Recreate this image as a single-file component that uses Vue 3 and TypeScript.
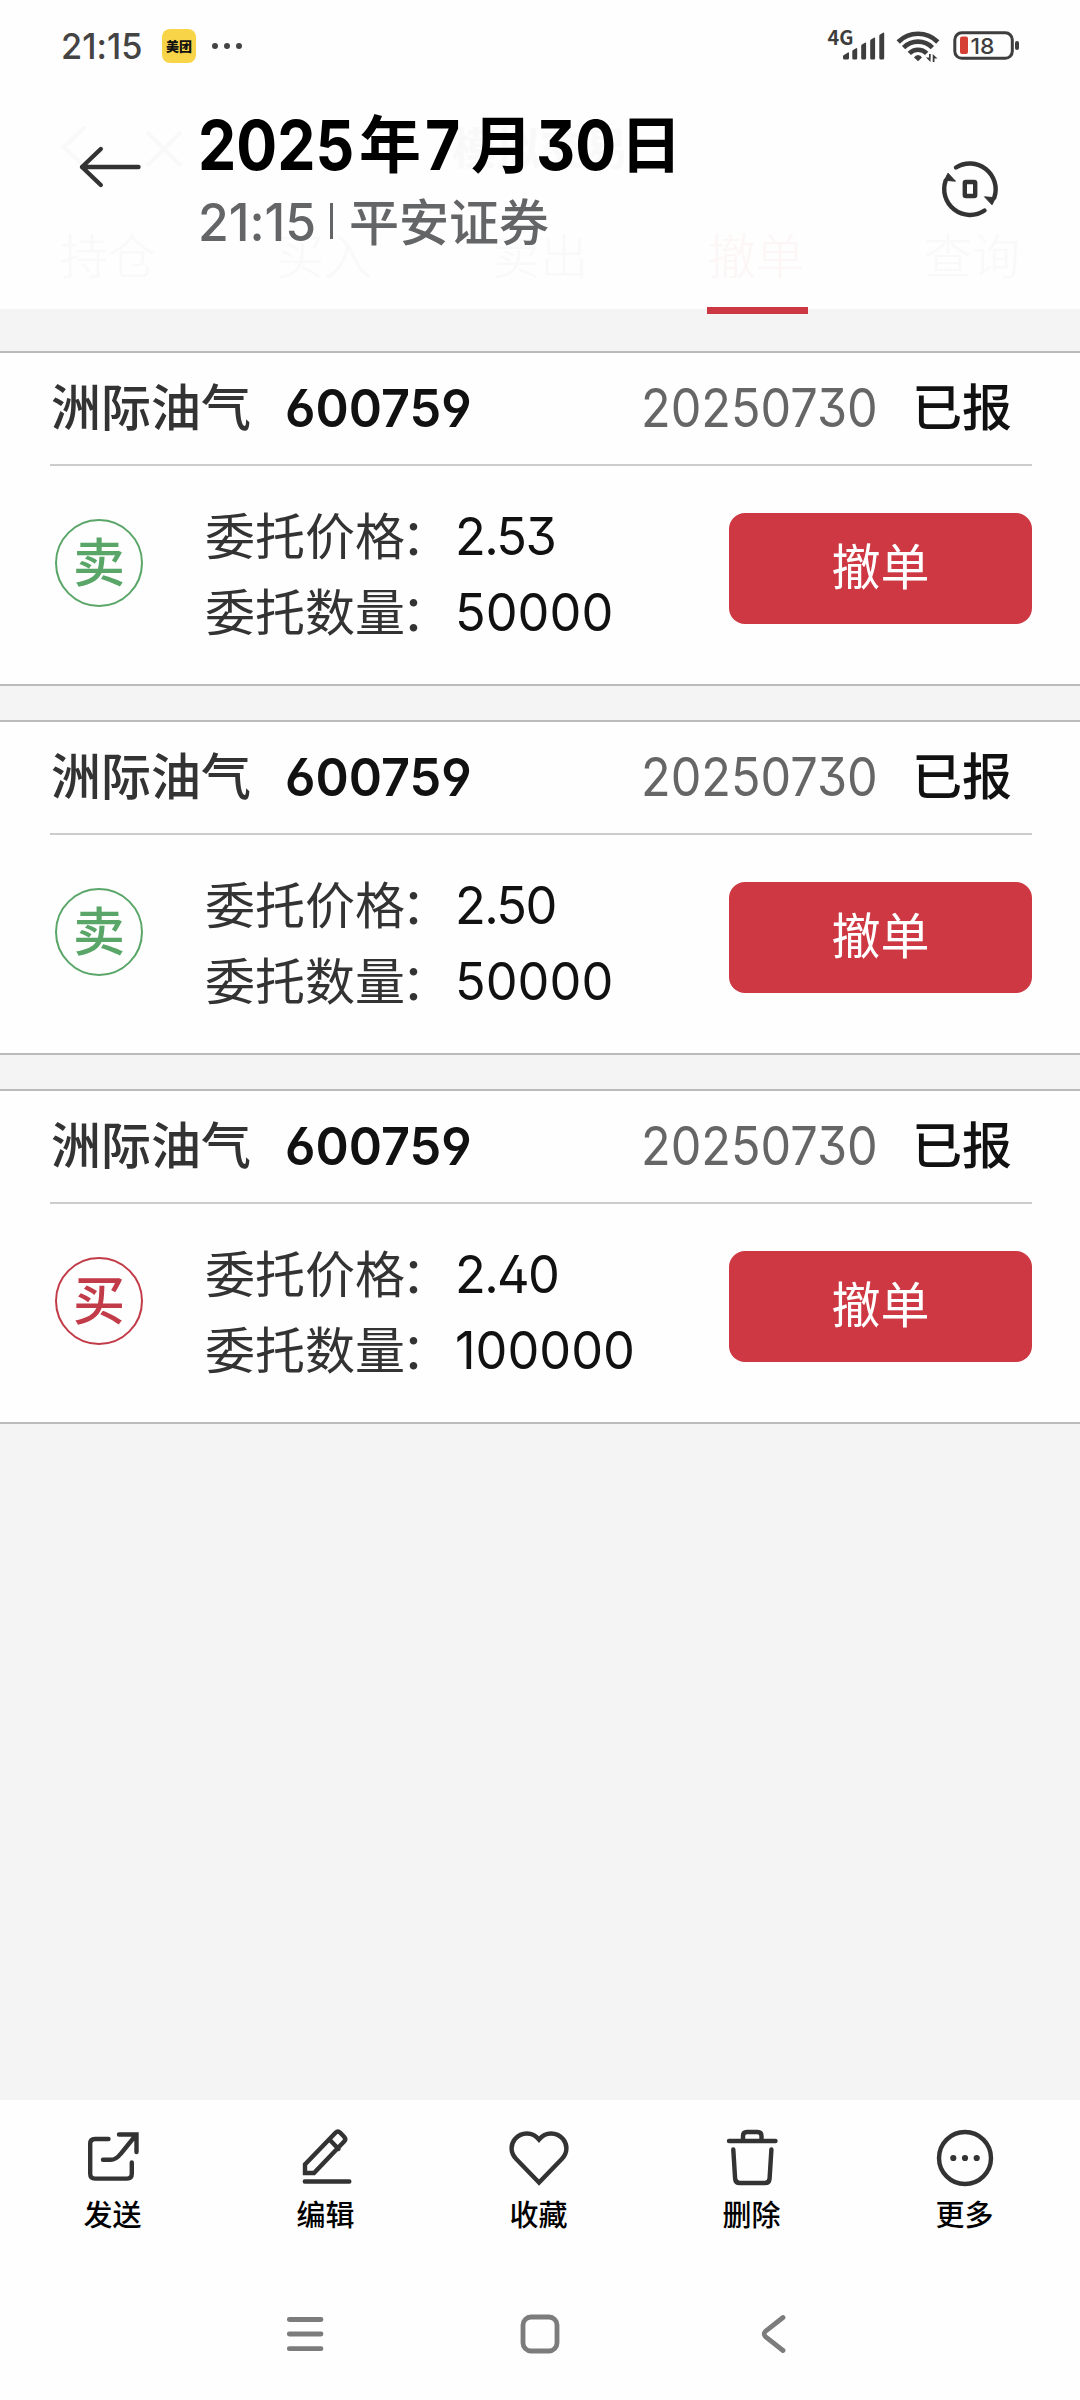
<script setup lang="ts">
interface Order {
  name: string
  code: string
  date: string
  status: string
  side: 'buy' | 'sell'
  price: string
  amount: string
}

const orders: Order[] = [
  { name: '洲际油气', code: '600759', date: '20250730', status: '已报', side: 'sell', price: '2.53', amount: '50000' },
  { name: '洲际油气', code: '600759', date: '20250730', status: '已报', side: 'sell', price: '2.50', amount: '50000' },
  { name: '洲际油气', code: '600759', date: '20250730', status: '已报', side: 'buy', price: '2.40', amount: '100000' },
]

const tabs: string[] = ['持仓', '买入', '卖出', '撤单', '查询']
const activeTab = '撤单'
</script>

<template>
  <div class="screen">
    <header class="top">
      <!-- faded page header lying under the viewer bar -->
      <div class="ghost" aria-hidden="true">
        <svg class="ghost-icons" width="200" height="50" viewBox="0 0 200 50">
          <path d="M85 5 64 25 85 45M147 10l34 34M181 10l-34 34" fill="none" stroke="#f9f9f9" stroke-width="4" />
        </svg>
        <span class="ghost-title">模拟交易</span>
        <div class="ghost-tabs">
          <span v-for="t in tabs" :key="t" :class="{ on: t === activeTab }">{{ t }}</span>
        </div>
        <i class="ghost-line"></i>
      </div>

      <div class="status">
        <span class="clock num">21:15</span>
        <span class="app">美团</span>
        <svg class="dots" width="32" height="8" viewBox="0 0 32 8"><g fill="#444"><circle cx="4" cy="4" r="3" /><circle cx="16" cy="4" r="3" /><circle cx="28" cy="4" r="3" /></g></svg>
        <svg class="sys" width="200" height="80" viewBox="820 6 200 80">
          <text x="827.5" y="44.500" class="net" textLength="26" lengthAdjust="spacingAndGlyphs">4G</text>
          <g fill="#3e3e3e">
            <path d="M843 56.500q0-1.200 1-1.600l4-2.400q1-.5 1 .8v4.700q0 1.500-1.500 1.500h-3q-1.500 0-1.500-1.500z" />
            <path d="M852.300 51.500q0-1 .8-1.400l3-1.900q1.100-.5 1.100.8v9q0 1.500-1.300 1.500h-2.300q-1.300 0-1.300-1.500z" />
            <path d="M861.200 46q0-1 .8-1.400l3-1.900q1.100-.5 1.100.8v14.500q0 1.500-1.300 1.500h-2.300q-1.300 0-1.300-1.500z" />
            <path d="M870.200 41q0-1 .8-1.400l3-1.900q1.100-.5 1.100.8v19.500q0 1.500-1.300 1.500h-2.300q-1.300 0-1.300-1.500z" />
            <path d="M879.300 36q0-1 .8-1.400l3-1.900q1.100-.5 1.100.8v24.500q0 1.500-1.300 1.500h-2.300q-1.300 0-1.300-1.500z" />
            <path d="M918 61.300l-4-3.800q1.300-2.500 4-2.500t4 2.500z" />
            <path d="M930.500 62 926 57.500h3v-3.500h1.800zM932.700 54l4.800 4.500h-3V62h-1.800z" />
          </g>
          <g fill="none" stroke="#3e3e3e" stroke-width="4.600">
            <path d="M898.200 42a28 28 0 0 1 39.600 0" />
            <path d="M903.600 47.600a20.400 20.400 0 0 1 28.800 0" />
            <path d="M909.300 53.300a12.300 12.300 0 0 1 17.400 0" />
          </g>
          <rect x="954.800" y="32.800" width="57.500" height="25.500" rx="7" fill="none" stroke="#3e3e3e" stroke-width="3" />
          <rect x="1015" y="41" width="4" height="9" rx="2" fill="#3e3e3e" />
          <rect x="960" y="36.500" width="8" height="17.500" rx="2" fill="#d64034" />
          <text x="970.500" y="54" class="pct" textLength="24" lengthAdjust="spacingAndGlyphs">18</text>
        </svg>
      </div>

      <div class="bar">
        <svg class="back" width="70" height="50" viewBox="76 142 70 50">
          <path d="M100.800 149 82 167l18.800 18M82 167h56.500" fill="none" stroke="#333" stroke-width="4.400" stroke-linecap="round" stroke-linejoin="round" />
        </svg>
        <div class="heading">
          <div class="title"><span class="num y">2025</span><span class="k k1">年</span><span class="num m">7</span><span class="k k2">月</span><span class="num d">30</span><span class="k k3">日</span></div>
          <div class="sub"><span class="num t">21:15</span><i></i><span class="src">平安证券</span></div>
        </div>
        <svg class="rotate" width="64" height="64" viewBox="-32 -32 64 64">
          <g fill="none" stroke="#333" stroke-width="4.400" stroke-linecap="round">
            <path d="M-14-21.500A25.800 25.800 0 0 1 24.300 8.500" />
            <path d="M14.500 21.500A25.800 25.800 0 0 1-24.300-8.500" />
            <rect x="-5.200" y="-7" width="10.400" height="14" rx="1" />
          </g>
          <path d="M14.500 7.800l11 1-3.500 7zM-14.500-7.800l-11-1 3.500-7z" fill="#333" stroke="#333" stroke-linejoin="round" />
        </svg>
      </div>
    </header>

    <main class="list">
      <section v-for="(o, i) in orders" :key="i" class="card">
        <div class="card-head">
          <span class="name">{{ o.name }}</span>
          <span class="code num">{{ o.code }}</span>
          <span class="date num">{{ o.date }}</span>
          <span class="state">{{ o.status }}</span>
        </div>
        <div class="card-body">
          <span class="side" :class="o.side">{{ o.side === 'buy' ? '买' : '卖' }}</span>
          <div class="rows">
            <div class="row"><span class="label">委托价格<em>：</em></span><b class="num price">{{ o.price }}</b></div>
            <div class="row"><span class="label">委托数量<em>：</em></span><b class="num">{{ o.amount }}</b></div>
          </div>
          <button class="cancel">撤单</button>
        </div>
      </section>
    </main>

    <footer class="tools">
      <div class="tool">
        <svg viewBox="-32 -32 64 64"><path d="M-4.500-19h-13.500q-4.800 0-4.800 4.800v30q0 4.800 4.800 4.800h32q4.800 0 4.800-4.800V4.500" /><path class="sharp" d="M6-23.500h17.500V-6M23-23 7.500-4Q3 1.800-2.500 1.800h-7.500" /></svg>
        <span>发送</span>
      </div>
      <div class="tool">
        <svg viewBox="-32 -32 64 64"><path class="sharp" d="M-21 15v-8.500L9.500-25.300q2.400-2.400 4.800 0l3.800 4q2.300 2.400 0 4.800L-12 15zM3.500-18.500l9 9.500M-21.200 23.500h44.500" /></svg>
        <span>编辑</span>
      </div>
      <div class="tool">
        <svg viewBox="-32 -32 64 64"><path class="sharp" d="M0 24.500-22.800 1C-29-5.500-28.500-13.500-24-19C-17.500-26.500-6.500-26.500 0-18.500C6.500-26.500 17.500-26.500 24-19C28.500-13.500 29-5.500 22.800 1Z" /></svg>
        <span>收藏</span>
      </div>
      <div class="tool">
        <svg viewBox="-32 -32 64 64"><path d="M-23-17h46.500M-9-17.500v-4.500q0-4 4-4H5.500q4 0 4 4v4.500M-18.700-8.500l1.800 29q.3 4.500 4.800 4.500h25q4.400 0 4.700-4.500l1.800-29" /></svg>
        <span>删除</span>
      </div>
      <div class="tool">
        <svg viewBox="-32 -32 64 64"><circle r="26" /><g class="fill"><circle cx="-11.700" r="3.100" /><circle r="3.100" /><circle cx="11.700" r="3.100" /></g></svg>
        <span>更多</span>
      </div>
    </footer>

    <nav class="nav">
      <svg width="1080" height="60" viewBox="0 2304 1080 60">
        <g fill="none" stroke="#7c7c7c" stroke-width="4.800" stroke-linecap="round" stroke-linejoin="round">
          <path d="M289.300 2319.500h31.700M289.300 2334h31.700M289.300 2348.700h31.700" />
          <rect x="523" y="2317" width="34" height="34" rx="8" />
          <path d="M783 2317.500l-17 13.300q-3.600 3.200 0 6.400l17 13.300" />
        </g>
      </svg>
    </nav>
  </div>
</template>

<style>
body { margin: 0; background: #f4f4f4; }
</style>

<style scoped>
.screen {
  width: 1080px;
  height: 2400px;
  display: flex;
  flex-direction: column;
  overflow: hidden;
  background: #f4f4f4;
  font-family: "Noto Sans CJK SC", sans-serif;
  color: #333;
}
.num {
  font-family: Inter, "Noto Sans CJK SC", sans-serif;
  font-feature-settings: "cv03", "cv04", "cv09", "ss01", "calt" 0;
  display: inline-block;
  white-space: nowrap;
  transform-origin: 0 50%;
}
.top { position: relative; height: 309px; background: #fefefe; flex: none; }
.status { position: relative; display: flex; align-items: center; height: 92px; padding-left: 61px; }
.clock { width: 101px; font-size: 36px; font-weight: 500; color: #444; transform: scaleX(.955); line-height: 92px; }
.app {
  width: 34px; height: 34px; border-radius: 8px; background: #f8d448; color: #111;
  font-size: 13px; font-weight: 900; line-height: 34px; text-align: center;
}
.dots { margin-left: 15px; }
.sys { margin-left: auto; margin-right: 60px; }
.net { font: 700 20px "Noto Sans CJK SC", sans-serif; fill: #3e3e3e; }
.pct { font: 500 22px Inter, sans-serif; fill: #3e3e3e; }
.bar { position: relative; display: flex; align-items: flex-start; }
.back { margin: 50px 0 0 76px; }
.heading { margin: 8px 0 0 52px; flex: 1; }
.title { display: flex; height: 90px; line-height: 90px; font-size: 62px; font-weight: 700; color: #000; }
.title .num { font-size: 69px; font-weight: 650; transform: scaleX(.88); }
.title .k { line-height: 82px; }
.y { width: 161px; }
.m { width: 46px; }
.d { width: 84px; }
.k1 { width: 66px; }
.k2 { width: 65px; }
.sub { display: flex; align-items: center; height: 66px; margin-top: -6px; line-height: 66px; font-size: 50px; font-weight: 500; color: #646567; }
.t { width: 132px; padding-top: 12px; font-size: 52px; transform: scaleX(.96); }
.sub i { width: 3px; height: 36px; margin-top: 8px; background: #646567; }
.src { margin-left: 16px; padding-top: 3px; }
.rotate { margin: 65px 78px 0 0; }

.ghost { position: absolute; inset: 0; color: #f9f9f9; }
.ghost-icons { position: absolute; left: 0; top: 122px; }
.ghost-title { position: absolute; left: 0; right: 0; top: 114px; text-align: center; font-size: 44px; line-height: 64px; font-weight: 700; }
.ghost-tabs { position: absolute; left: 0; right: 0; top: 221px; display: flex; font-size: 48px; line-height: 64px; font-weight: 300; }
.ghost-tabs span { width: 216px; text-align: center; }
.ghost-tabs .on { color: #fdf6f6; }
.ghost-line { position: absolute; left: 707px; top: 307px; width: 101px; height: 7px; background: #cb3743; }

.list { flex: 1; display: flex; flex-direction: column; gap: 34px; padding-top: 42px; }
.card { height: 331px; background: #fefefe; border-top: 2px solid #bbb; border-bottom: 2px solid #bbb; }
.card-head {
  display: flex; height: 111px; margin: 0 48px 0 50px; border-bottom: 2px solid #ccc;
  font-size: 50px; line-height: 111px;
}
.name, .state { line-height: 103px; }
.name { width: 234px; padding-left: 1px; font-weight: 500; white-space: nowrap; }
.code { width: 190px; font-size: 52px; font-weight: 600; color: #111; transform: scaleX(.97); }
.date { width: 271px; margin-left: auto; font-size: 53px; color: #666; transform: scaleX(.917); }
.state { width: 120px; font-weight: 500; color: #111; }
.card-body { display: flex; align-items: center; height: 193px; margin: 0 48px 0 55px; padding-top: 5px; }
.side {
  box-sizing: border-box; width: 88px; height: 88px; margin-top: -10px; border: 2px solid; border-radius: 50%;
  font-size: 52px; line-height: 77px; text-align: center; font-weight: 500;
}
.sell { color: #5aa668; }
.buy { color: #c23b48; }
.rows { flex: 1; margin: 6px 0 0 62px; }
.row { display: flex; height: 76px; line-height: 76px; font-size: 50px; white-space: nowrap; }
.row em { display: inline-block; width: 50px; font-style: normal; text-indent: -4px; }
.row b { padding-top: 4px; font-size: 52px; font-weight: 400; color: #111; transform: scaleX(.972); }
.row .price { letter-spacing: -1.7px; }
.cancel {
  width: 303px; height: 111px; margin-top: 2px; border: 0; border-radius: 16px; background: #cd3843; color: #fff;
  padding: 0 0 11px; font: 400 49px/1 "Noto Sans CJK SC", sans-serif;
}

.tools { display: flex; height: 200px; background: #fefefe; flex: none; padding: 0 9px 0 6px; }
.tool { flex: 1; display: flex; flex-direction: column; align-items: center; font-size: 29px; font-weight: 500; color: #000; }
.tool svg { width: 64px; height: 64px; margin-top: 26px; fill: none; stroke: #333; stroke-width: 4.4; stroke-linecap: round; stroke-linejoin: round; }
.tool .sharp { stroke-linejoin: miter; }
.tool .fill { fill: #333; stroke: none; }
.tool span { line-height: 40px; margin-top: 3px; }
.nav { height: 100px; background: #fefefe; flex: none; }
.nav svg { display: block; margin-top: 4px; }
</style>
